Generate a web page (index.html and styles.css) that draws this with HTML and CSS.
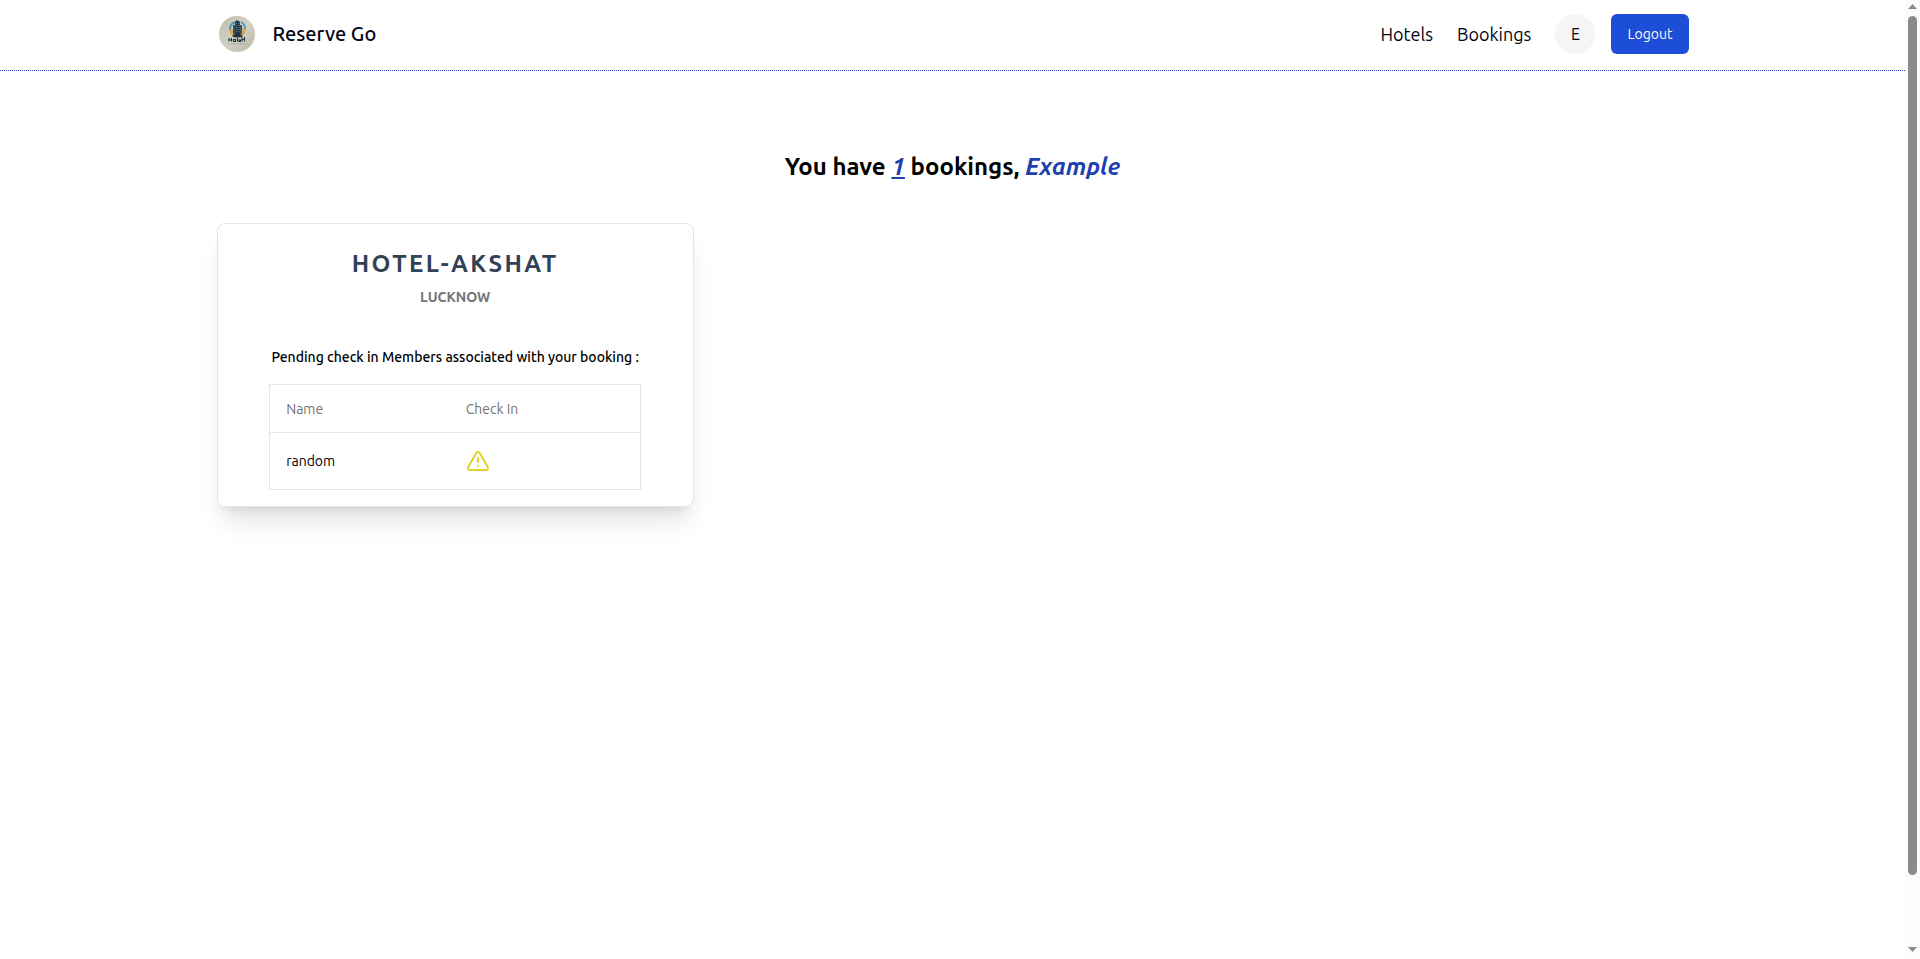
FILE: index.html
```html
<!DOCTYPE html>
<html lang="en">
<head>
<meta charset="utf-8">
<meta name="viewport" content="width=device-width, initial-scale=1">
<title>Reserve Go</title>
<link rel="stylesheet" href="styles.css">
</head>
<body>
<div class="page">
  <header class="navbar">
    <nav class="container navbar-inner">
      <a class="brand" href="#">
        <svg class="brand-logo" viewBox="0 0 36 36" aria-hidden="true">
          <defs>
            <linearGradient id="disc" x1="0" y1="0" x2="1" y2="1">
              <stop offset="0" stop-color="#bdbbad"/>
              <stop offset="0.5" stop-color="#d3d1c3"/>
              <stop offset="1" stop-color="#bcb8aa"/>
            </linearGradient>
          </defs>
          <circle cx="18" cy="18" r="18" fill="url(#disc)"/>
          <path d="M11 14a8 8 0 0 1 5-8" fill="none" stroke="#4d9cb5" stroke-width="2"/>
          <path d="M22 6a8 8 0 0 1 4 8" fill="none" stroke="#4d9cb5" stroke-width="2"/>
          <path d="M10 14c1 4 3 6 6 7l-1-8zM27 13c-1 5-3 7-6 8l2-9z" fill="#d9a754"/>
          <path d="M16 6l2-2 3 2v14h-5z" fill="#26394a"/>
          <path d="M14 9h2v9h-2zM21 9h2v9h-2z" fill="#35566a"/>
          <path d="M17.500 7v10M20 7v10" stroke="#7d97a0" stroke-width="0.8" stroke-dasharray="1 1"/>
          <path d="M13 20c3-3 8-3 11 0-3 2-8 2-11 0z" fill="#1f3440"/>
          <path d="M10 22v3.500M12.500 22v3.500M10 24h2.500M14.500 23.500h2v2h-2zM18.500 22v3.500M20 24h1.500v1.500H20zM23 21v4.500M25.500 21v4.500M23 23.500h2.500" fill="none" stroke="#183541" stroke-width="1.1"/>
          <path d="M9 28h19" stroke="#8b9594" stroke-width="0.7" stroke-dasharray="2 1"/>
        </svg>
        <span>Reserve Go</span>
      </a>
      <div class="nav-links">
        <a class="nav-link" href="#">Hotels</a>
        <a class="nav-link" href="#">Bookings</a>
        <div class="account">
          <span class="avatar">E</span>
          <button class="logout" type="button">Logout</button>
        </div>
      </div>
    </nav>
  </header>
  <main class="container content">
    <h1 class="summary">You have <em class="count">1</em> bookings, <em>Example</em></h1>
    <section class="cards">
      <article class="card">
        <h2 class="hotel-name">HOTEL-AKSHAT</h2>
        <p class="hotel-city">LUCKNOW</p>
        <div class="members">
          <table class="member-table">
            <caption>Pending check in Members associated with your booking :</caption>
            <thead><tr><th scope="col">Name</th><th scope="col">Check In</th></tr></thead>
            <tbody><tr>
              <td>random</td>
              <td>
                <svg class="warning" viewBox="0 0 24 24" role="img" aria-label="Pending">
                  <path d="m21.73 18-8-14a2 2 0 0 0-3.48 0l-8 14A2 2 0 0 0 4 21h16a2 2 0 0 0 1.73-3Z"/>
                  <path d="M12 9v4"/>
                  <path d="M12 17h.01"/>
                </svg>
              </td>
            </tr></tbody>
          </table>
        </div>
      </article>
    </section>
  </main>
</div>
<div class="scrollbar" aria-hidden="true">
  <svg class="arrow" viewBox="0 0 9 5"><path d="M4.500 0L9 5H0z"/></svg>
  <div class="track"><div class="thumb"></div></div>
  <svg class="arrow" viewBox="0 0 9 5"><path d="M0 0h9L4.500 5z"/></svg>
</div>
</body>
</html>
```
FILE: styles.css
```css
* { box-sizing: border-box; }

body {
  margin: 0;
  height: 100vh;
  display: flex;
  overflow: hidden;
  background: #fff;
  color: #0a0a0a;
  font-family: Ubuntu, "Noto Sans", sans-serif;
  font-size: 14px;
  line-height: 20px;
}

h1, h2, p { margin: 0; }
a { color: inherit; text-decoration: none; }

.page { flex: 1; min-width: 0; overflow: hidden; }

.container {
  width: 100%;
  max-width: 1536px;
  margin: 0 auto;
  padding: 0 32px;
}

.navbar {
  padding: 14px 0 16px;
  border-bottom: 1px dotted #1e40af;
  color: #020617;
}

.navbar-inner,
.brand,
.nav-links,
.account { display: flex; align-items: center; }

.navbar-inner { justify-content: space-between; }

.brand {
  gap: 18px;
  padding-left: 2px;
  font-size: 20px;
  line-height: 28px;
  font-weight: 500;
}
.brand-logo { width: 36px; height: 36px; }

.nav-links { gap: 24px; }
.nav-link { font-size: 18px; line-height: 28px; }
.account { gap: 16px; }

.avatar {
  display: grid;
  place-items: center;
  width: 40px;
  height: 40px;
  border-radius: 50%;
  background: #f5f5f5;
  font-size: 16px;
}

.logout {
  height: 40px;
  padding: 0 16px;
  border: 0;
  border-radius: 6px;
  background: #1d4ed8;
  color: #fafafa;
  font: inherit;
}

.summary {
  padding: 80px 0 40px;
  text-align: center;
  font-size: 24px;
  line-height: 32px;
  font-weight: 600;
  color: #000;
}
.summary em { color: #1e40af; }
.summary .count { text-decoration: underline; }

.cards {
  display: grid;
  grid-template-columns: repeat(3, 1fr);
  gap: 20px;
}

.card {
  display: flex;
  flex-direction: column;
  align-items: center;
  padding: 24px 24px 16px;
  border: 1px solid #e5e5e5;
  border-radius: 8px;
  box-shadow: 0 20px 25px -5px rgb(0 0 0 / 10%), 0 8px 10px -6px rgb(0 0 0 / 10%);
}

.hotel-name {
  font-size: 24px;
  line-height: 32px;
  font-weight: 600;
  letter-spacing: 0.1em;
  color: #334155;
}

.hotel-city {
  margin-top: 7px;
  font-weight: 600;
  color: #737373;
}

.members { width: 372px; max-width: 100%; margin-top: 40px; }

.member-table {
  width: 100%;
  border: 1px solid #e5e5e5;
  border-collapse: collapse;
  table-layout: fixed;
  text-align: left;
}
.member-table caption {
  padding-bottom: 17px;
  font-weight: 500;
  white-space: nowrap;
  color: #000;
}
.member-table th {
  width: 180px;
  height: 48px;
  padding: 0 16px;
  border-bottom: 1px solid #e5e5e5;
  font-weight: 400;
  color: #737373;
}
.member-table th + th { width: auto; }
.member-table td { padding: 16px; color: #000; }

.warning {
  display: block;
  width: 24px;
  height: 24px;
  fill: none;
  stroke: #e2d12a;
  stroke-width: 2;
  stroke-linecap: round;
  stroke-linejoin: round;
}

.scrollbar {
  width: 15px;
  display: flex;
  flex-direction: column;
  align-items: center;
  gap: 7px;
  padding: 4px 0 7px;
  background: #fcfcfc;
}
.arrow { width: 9px; height: 5px; fill: #8b8b8b; }
.track { flex: 1; }
.thumb { width: 9px; height: 93%; border-radius: 5px; background: #8b8b8b; }
```
